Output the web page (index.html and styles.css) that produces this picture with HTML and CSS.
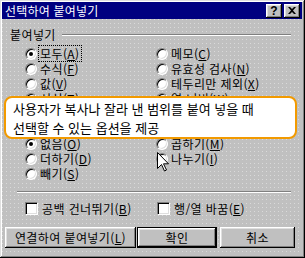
FILE: index.html
```html
<!DOCTYPE html>
<html lang="ko">
<head>
<meta charset="utf-8">
<title>선택하여 붙여넣기</title>
<link rel="stylesheet" href="styles.css">
</head>
<body>
<div class="window">
  <div class="titlebar">
    <span class="title">선택하여 붙여넣기</span>
    <div class="tbtns">
      <span class="tbtn help">?</span>
      <span class="tbtn close"><svg width="8" height="7" viewBox="0 0 8 7"><path d="M0 0h2l2 2 2-2h2L5 3.5 8 7H6L4 5 2 7H0l3-3.5z" fill="#000"/></svg></span>
    </div>
  </div>
  <div class="content">
    <div class="group">
      <div class="glabel"><span>붙여넣기</span><i class="gline"></i></div>
      <div class="options">
        <label class="opt"><i class="radio on"></i><span class="focus">모두(<u>A</u>)</span></label>
        <label class="opt"><i class="radio"></i><span>메모(<u>C</u>)</span></label>
        <label class="opt"><i class="radio"></i><span>수식(<u>F</u>)</span></label>
        <label class="opt"><i class="radio"></i><span>유효성 검사(<u>N</u>)</span></label>
        <label class="opt"><i class="radio"></i><span>값(<u>V</u>)</span></label>
        <label class="opt"><i class="radio"></i><span>테두리만 제외(<u>X</u>)</span></label>
        <label class="opt"><i class="radio"></i><span>서식(<u>T</u>)</span></label>
        <label class="opt"><i class="radio"></i><span>열 너비(<u>W</u>)</span></label>
      </div>
    </div>
    <div class="group second">
      <div class="glabel"><span>연산</span><i class="gline"></i></div>
      <div class="options">
        <label class="opt"><i class="radio on"></i><span>없음(<u>O</u>)</span></label>
        <label class="opt"><i class="radio"></i><span>곱하기(<u>M</u>)</span></label>
        <label class="opt"><i class="radio"></i><span>더하기(<u>D</u>)</span></label>
        <label class="opt"><i class="radio"></i><span>나누기(<u>I</u>)</span></label>
        <label class="opt"><i class="radio"></i><span>빼기(<u>S</u>)</span></label>
      </div>
    </div>
    <div class="sep"></div>
    <div class="checks">
      <label class="chk"><i class="box"></i><span>공백 건너뛰기(<u>B</u>)</span></label>
      <label class="chk"><i class="box"></i><span>행/열 바꿈(<u>E</u>)</span></label>
    </div>
    <div class="buttons">
      <span class="btn link">연결하여 붙여넣기(<u>L</u>)</span>
      <span class="btn ok default">확인</span>
      <span class="btn cancel">취소</span>
    </div>
  </div>
  <div class="tooltip">사용자가 복사나 잘라 낸 범위를 붙여 넣을 때<br>선택할 수 있는 옵션을 제공</div>
  <svg class="cursor" width="13" height="20" viewBox="0 0 13 20"><path d="M0.5 0.5V16.5L4.5 12.5L7.5 19L9.5 18L6.5 11.8H11.5Z" fill="#fff" stroke="#000" stroke-width="1" stroke-linejoin="miter"/></svg>
</div>
</body>
</html>
```
FILE: styles.css
```css
* { box-sizing: border-box; margin: 0; padding: 0; }
html, body { width: 305px; height: 258px; overflow: hidden; background: #c0c0c0; }
body {
  font-family: "Noto Sans CJK KR", "Noto Sans", sans-serif;
  font-size: 12px;
  color: #000;
}
u { text-decoration: underline; text-underline-offset: 1px; }

.window {
  position: relative;
  width: 305px;
  height: 258px;
  padding: 2px 3px 3px 2px;
  background: #c0c0c0;
  box-shadow: inset -1px -1px #000, inset 1px 1px #dfdfdf, inset -2px -2px #808080, inset 2px 2px #fff;
}

.titlebar {
  height: 17px;
  background: #000080;
  display: flex;
  align-items: center;
  padding: 0 2px 0 3px;
  color: #fff;
}
.title { flex: 1; font-size: 12px; line-height: 17px; white-space: nowrap; letter-spacing: 0.2px; }
.tbtns { display: flex; gap: 2px; }
.tbtn {
  width: 16px;
  height: 14px;
  background: #c0c0c0;
  box-shadow: inset -1px -1px #000, inset 1px 1px #fff, inset -2px -2px #808080, inset 2px 2px #dfdfdf;
  display: flex;
  align-items: center;
  justify-content: center;
  color: #000;
  font: bold 12px/14px "Liberation Sans", sans-serif;
}
.tbtn svg { display: block; margin-left: -1px; }

.content {
  height: 236px;
  padding: 9px 0 0 3px;
  letter-spacing: 0.4px;
  background-color: #c0c0c0;
  background-image:
    linear-gradient(to right, transparent 1px, #c0c0c0 1px),
    linear-gradient(to bottom, #dadada 1px, #c0c0c0 1px);
  background-size: 4px 4px;
}

.group { margin: 0 11px 0 5px; }
.group.second { margin-top: 12px; }
.glabel { display: flex; align-items: center; height: 14px; line-height: 14px; }
.gline {
  flex: 1;
  height: 2px;
  margin-left: 6px;
  border-top: 1px solid #808080;
  border-bottom: 1px solid #fff;
}

.options {
  margin-top: 4px;
  padding-left: 15px;
  display: grid;
  grid-template-columns: 131px 1fr;
  grid-auto-rows: 15px;
}
.opt { display: flex; align-items: center; line-height: 15px; white-space: nowrap; }
.radio {
  position: relative;
  width: 12px;
  height: 12px;
  margin-right: 3px;
  flex: none;
  border-radius: 50%;
  background: #fff;
  border: 1px solid;
  border-color: #808080 #fff #fff #808080;
  box-shadow: inset 1px 1px 0 #000, inset -1px -1px 0 #dfdfdf;
}
.radio.on::after {
  content: "";
  position: absolute;
  left: 3px;
  top: 3px;
  width: 4px;
  height: 4px;
  border-radius: 50%;
  background: #000;
}
.focus { outline: 1px dotted #000; padding: 0 1px; margin-left: -1px; }

.sep {
  height: 2px;
  margin: 10px 11px 0 12px;
  border-top: 1px solid #808080;
  border-bottom: 1px solid #fff;
}

.checks {
  margin-top: 9px;
  padding-left: 20px;
  display: grid;
  grid-template-columns: 132px 1fr;
  height: 13px;
}
.chk { display: flex; align-items: center; line-height: 13px; white-space: nowrap; }
.box {
  width: 13px;
  height: 13px;
  margin-right: 4px;
  flex: none;
  background: #fff;
  border: 1px solid;
  border-color: #808080 #fff #fff #808080;
  box-shadow: inset 1px 1px 0 #000, inset -1px -1px 0 #dfdfdf;
}

.buttons { margin-top: 12px; display: flex; }
.btn {
  height: 21px;
  display: flex;
  align-items: center;
  justify-content: center;
  background: #c0c0c0;
  box-shadow: inset -1px -1px #000, inset 1px 1px #fff, inset -2px -2px #808080, inset 2px 2px #dfdfdf;
  white-space: nowrap;
}
.btn.link { width: 131px; }
.btn.ok { width: 80px; margin-left: 1px; }
.btn.cancel { width: 75px; margin-left: 3px; }
.btn.default { border: 1px solid #000; }

.tooltip {
  position: absolute;
  left: 4px;
  top: 96px;
  width: 293px;
  height: 43px;
  padding: 1px 7px 0;
  background: #fff;
  border: 2px solid #f29a00;
  border-radius: 8px;
  font-size: 13px;
  line-height: 19px;
  white-space: nowrap;
}

.cursor { position: absolute; left: 157px; top: 152px; }
```
